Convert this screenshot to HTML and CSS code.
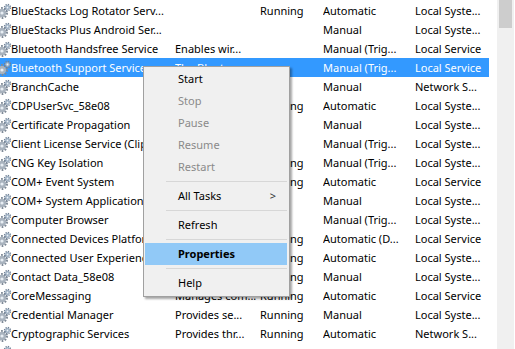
FILE: index.html
```html
<!DOCTYPE html>
<html lang="en">
<head>
    <meta charset="UTF-8">
    <title>Services</title>
    <link rel="stylesheet" href="styles.css">
</head>
<body>
    <div class="window">
        <div class="list" id="list"></div>
        <div class="scroll"><div class="thumb"></div></div>

        <ul class="menu">
            <li>Start</li>
            <li class="off">Stop</li>
            <li class="off">Pause</li>
            <li class="off">Resume</li>
            <li class="off">Restart</li>
            <li class="sep"></li>
            <li class="sub">All Tasks <span class="arrow">&gt;</span></li>
            <li class="sep"></li>
            <li>Refresh</li>
            <li class="sep"></li>
            <li class="hot">Properties</li>
            <li class="sep"></li>
            <li>Help</li>
        </ul>
    </div>

    <script>
        var rows = [
            ["BlueStacks Log Rotator Serv...", "", "Running", "Automatic", "Local Syste..."],
            ["BlueStacks Plus Android Ser...", "", "", "Manual", "Local Syste..."],
            ["Bluetooth Handsfree Service", "Enables wir...", "", "Manual (Trig...", "Local Service"],
            ["Bluetooth Support Service", "The Bluet...", "", "Manual (Trig...", "Local Service"],
            ["BranchCache", "This service ...", "", "Manual", "Network S..."],
            ["CDPUserSvc_58e08", "<Failed to R...", "Running", "Automatic", "Local Syste..."],
            ["Certificate Propagation", "Copies user ...", "", "Manual", "Local Syste..."],
            ["Client License Service (ClipSVC)", "Provides inf...", "", "Manual (Trig...", "Local Syste..."],
            ["CNG Key Isolation", "The CNG ke...", "Running", "Manual (Trig...", "Local Syste..."],
            ["COM+ Event System", "Supports Sy...", "Running", "Automatic", "Local Service"],
            ["COM+ System Application", "Manages th...", "", "Manual", "Local Syste..."],
            ["Computer Browser", "Maintains a...", "", "Manual (Trig...", "Local Syste..."],
            ["Connected Devices Platform Service", "This service ...", "Running", "Automatic (D...", "Local Service"],
            ["Connected User Experiences and Telemetry", "The Connec...", "Running", "Automatic", "Local Syste..."],
            ["Contact Data_58e08", "Indexes con...", "Running", "Manual", "Local Syste..."],
            ["CoreMessaging", "Manages com...", "Running", "Automatic", "Local Service"],
            ["Credential Manager", "Provides se...", "Running", "Manual", "Local Syste..."],
            ["Cryptographic Services", "Provides thr...", "Running", "Automatic", "Network S..."],
            ["DataSharing Service", "Provides da...", "", "Manual (Trig...", "Local Syste..."]
        ];

        var gear = '<svg class="ico" viewBox="5 0 11 16" width="11" height="16">' +
            '<circle cx="7" cy="10" r="4.2" fill="#a9b3be"/>' +
            '<circle cx="7" cy="10" r="5" fill="none" stroke="#7f8a97" stroke-width="2" stroke-dasharray="1.7 1.45"/>' +
            '<circle cx="7" cy="10" r="1.6" fill="#e8eef4"/>' +
            '<circle cx="12.5" cy="4.5" r="2.4" fill="#9fb2c6"/>' +
            '<circle cx="12.5" cy="4.5" r="3" fill="none" stroke="#6f8196" stroke-width="1.4" stroke-dasharray="1.3 1.05"/>' +
            '<circle cx="12.5" cy="4.5" r="0.9" fill="#eef2f6"/>' +
            '</svg>';

        var list = document.getElementById("list");
        rows.forEach(function (r, i) {
            var row = document.createElement("div");
            row.className = i == 3 ? "row sel" : "row";
            var html = '<div class="cell name">' + gear + '<span>' + r[0].replace(/</g, "&lt;") + '</span></div>';
            for (var c = 1; c < r.length; c++) {
                html += '<div class="cell">' + r[c].replace(/</g, "&lt;") + '</div>';
            }
            row.innerHTML = html;
            list.appendChild(row);
        });
    </script>
</body>
</html>
```

FILE: styles.css
```css
body {
    margin: 0;
    background-color: #fff;
    font-family: "Noto Sans", "Open Sans", sans-serif;
    font-size: 11px;
    color: #000;
    overflow: hidden;
}

.window {
    position: relative;
    display: flex;
    width: 515px;
    height: 349px;
    overflow: hidden;
}

.list {
    width: 489px;
    padding-top: 1px;
}

.row {
    display: grid;
    grid-template-columns: 175px 85px 63px 92px 74px;
    height: 19px;
    line-height: 19px;
    white-space: nowrap;
}

.row.sel {
    background-color: #3399ff;
    color: #fff;
}

.cell {
    overflow: hidden;
}

.name {
    display: flex;
    align-items: center;
}

.ico {
    flex: none;
}

.scroll {
    margin-left: 8px;
    width: 17px;
    background-color: #f0f0f0;
}

.thumb {
    margin: 0 2px;
    height: 28px;
    background-color: #cdcdcd;
}

.menu {
    position: absolute;
    left: 143px;
    top: 66px;
    width: 145px;
    margin: 0;
    padding: 1px 0 2px;
    list-style: none;
    background-color: #f0f0f0;
    border: 1px solid #a0a0a0;
    box-shadow: 2px 2px 2px rgba(0, 0, 0, 0.35);
}

.menu li {
    position: relative;
    height: 22px;
    line-height: 22px;
    margin: 0 2px 0 1px;
    padding-left: 33px;
}

.menu li.off {
    color: #8a8a8a;
}

.menu li.hot {
    background-color: #91c9f7;
    font-weight: bold;
}

.menu li.sep {
    height: 7px;
    margin-left: 22px;
    padding: 0;
    background: linear-gradient(#d7d7d7, #d7d7d7) no-repeat 0 3px / 100% 1px;
}

.arrow {
    position: absolute;
    right: 11px;
    top: 0;
    color: #333;
}
```
